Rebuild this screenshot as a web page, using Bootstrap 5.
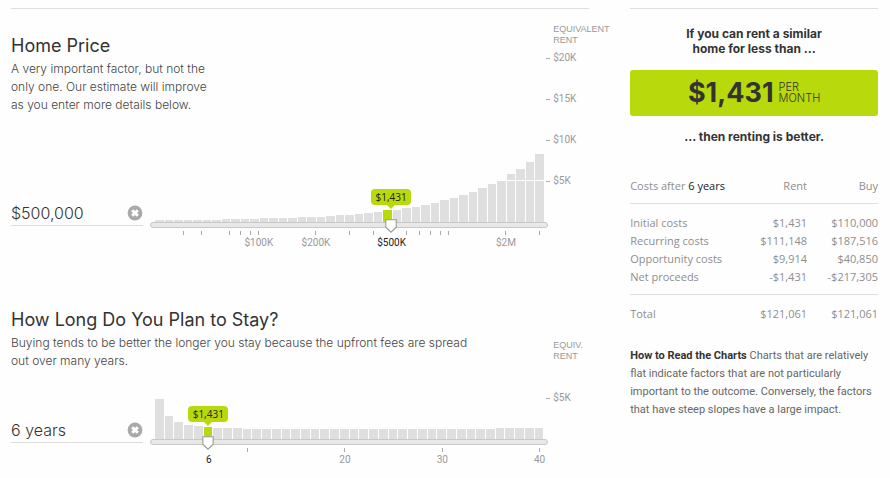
<!DOCTYPE html>
<html lang="en">
<head>
<meta charset="utf-8">
<meta name="viewport" content="width=device-width, initial-scale=1">
<title>Is It Better to Rent or Buy?</title>
<link href="https://cdn.jsdelivr.net/npm/bootstrap@5.3.0/dist/css/bootstrap.min.css" rel="stylesheet">
<style>
  :root { --lime: #b8d90b; --bar: #dfdfdf; --rule: #dedede; --muted: #999; }
  body { font-family: Inter, "Liberation Sans", sans-serif; font-size: 12px; color: #333; background: #fefefe; }
  .page-grid { display: grid; grid-template-columns: 7fr 3fr; column-gap: 41px; padding: 8px 12px 0 11px; }
  .ruled { border-top: 1px solid var(--rule); }

  /* One factor: heading over an input, a bar chart with its slider, and a rent axis */
  .factor { display: grid; grid-template-columns: 139px 1fr 41px; grid-template-rows: auto 37px; }
  .factor-price { padding-top: 15px; }
  .factor-stay { padding-top: 81px; }
  .factor-head { grid-area: 1 / 1 / 2 / 3; }
  .factor-price .factor-head { padding-top: 10px; max-width: 202px; }
  .factor-stay .factor-head { max-width: 468px; margin-top: -32px; padding-bottom: 67px; }
  .factor-head h2 { font-size: 18px; line-height: 24px; font-weight: 400; margin: 0 0 2px; }
  .factor-head p { line-height: 18px; font-weight: 300; margin: 0; color: #444; }
  .value-field { grid-area: 1 / 1 / 2 / 2; margin: 0 7px -4px 0; border-bottom: 1px solid var(--rule); z-index: 1; }
  .value-field input { font-size: 16px; line-height: 24px; font-weight: 300; color: #333; min-width: 0; background: none; outline-offset: 2px; }
  .clear-btn { line-height: 0; }
  .plot { grid-area: 1 / 2 / 2 / 3; }
  .bars { padding: 0 4px 0 5px; }
  .bars > span { flex: 1 1 0; background: var(--bar); border-right: 1px solid #fefefe; }
  .bars > .current { background: var(--lime); }
  .gridline { bottom: 41px; height: 1px; background: #fefefe; }

  .axis { grid-area: 1 / 3 / 2 / 4; font-family: "Liberation Sans", sans-serif; color: var(--muted); }
  .axis-title { font-size: 9px; line-height: 11px; padding-left: 5px; width: 60px; margin-bottom: 12px; }
  .factor-stay .axis-title { margin-bottom: 36px; }
  .axis ol { font-family: Roboto, sans-serif; font-size: 10px; line-height: 12px; }
  .axis li { height: 41px; padding-left: 5px; }
  .axis li > span { display: block; transform: translateY(-50%); }
  .axis li > span::before { content: ""; position: absolute; left: -7px; top: 6px; width: 4px; height: 1px; background: #aaa; }

  .track-area { grid-area: 2 / 2 / 3 / 3; }
  .track { appearance: none; height: 6px; margin: 0; background: #e8e8e8; border: 1px solid #c8c8c8; border-radius: 3px; cursor: pointer; }
  .track::-webkit-slider-thumb { appearance: none; width: 11px; height: 13px; opacity: 0; }
  .handle { top: -3px; transform: translateX(-50%); pointer-events: none; }
  .scale-mark { top: 9px; width: 1px; height: 4px; background: #aaa; }
  .scale-mark > span { position: absolute; top: 5px; left: 50%; transform: translateX(-50%); font: 10px/13px Roboto, sans-serif; color: var(--muted); }
  .scale-mark.current { background: none; }
  .scale-mark.current > span { color: #222; }
  .rent-tip { bottom: 17px; transform: translateX(-50%); background: var(--lime); border-radius: 4px; width: 40px; font: 10px/16px "Open Sans", sans-serif; color: #222; }
  .rent-tip::after { content: ""; position: absolute; left: 50%; top: 100%; margin-left: -4px; border: 4px solid transparent; border-top-color: var(--lime); border-bottom: 0; }

  .lead-in { padding-top: 17px; }
  .verdict { font-size: 12px; line-height: 15px; font-weight: 700; margin: 0; }
  .answer { background: var(--lime); border-radius: 3px; padding: 6px 0; gap: 5px; margin: 14px 0 13px; }
  .answer strong { font-size: 27px; line-height: 34px; }
  .answer span { font-size: 11px; line-height: 11px; font-weight: 300; }
  .costs { margin: 33px 0 24px; color: #8e8e8e; font-family: "Open Sans", sans-serif; font-size: 11px; line-height: 18px; }
  .costs th, .costs td { font-weight: inherit; padding: 0; }
  .costs th + *, .costs th + * + * { text-align: right; }
  .costs thead th { padding-bottom: 8px; }
  .costs thead th:last-child { width: 71px; }
  .costs tbody tr:first-child > *, .costs tfoot tr > * { padding-top: 10px; border-top: 1px solid var(--rule); }
  .costs tbody tr:last-child > * { padding-bottom: 8px; }
  .costs .years { color: #222; }
  .howto { font-family: Roboto, sans-serif; font-size: 11px; line-height: 18px; color: #666; }
  .howto b { color: #333; }
</style>
<script src="https://cdn.jsdelivr.net/npm/bootstrap@5.3.0/dist/js/bootstrap.bundle.min.js"></script>
</head>
<body>
<div class="page-grid">
  <main>
    <section class="factor factor-price ruled">
      <div class="factor-head">
        <h2>Home Price</h2>
        <p>A very important factor, but not the only one. Our estimate will improve as you enter more details below.</p>
      </div>
      <div class="value-field d-flex align-items-center align-self-end">
        <input id="price" class="border-0 p-0 flex-grow-1" type="text" value="$500,000" aria-label="Home price">
        <button class="clear-btn btn p-0 border-0" type="button" aria-label="Reset home price">
          <svg width="16" height="16" viewBox="0 0 16 16"><circle cx="8" cy="8" r="7.4" fill="#a9a9a9"/><path d="M5.2 5.2l5.6 5.6M10.8 5.2l-5.6 5.6" stroke="#fff" stroke-width="3"/></svg>
        </button>
      </div>
      <div class="plot position-relative d-flex flex-column justify-content-end">
        <div class="bars d-flex align-items-end" id="price-bars"></div>
        <div class="gridline position-absolute start-0 end-0"></div>
        <div class="rent-tip position-absolute text-center" id="price-tip">$1,431</div>
      </div>
      <div class="axis d-flex flex-column justify-content-end">
        <div class="axis-title">EQUIVALENT RENT</div>
        <ol class="list-unstyled m-0">
          <li><span>$20K</span></li><li><span>$15K</span></li><li><span>$10K</span></li><li><span>$5K</span></li>
        </ol>
      </div>
      <div class="track-area position-relative" id="price-scale">
        <input class="track d-block w-100" type="range" min="0" max="100" value="61" aria-label="Home price slider">
      </div>
    </section>

    <section class="factor factor-stay">
      <div class="factor-head">
        <h2>How Long Do You Plan to Stay?</h2>
        <p>Buying tends to be better the longer you stay because the upfront fees are spread out over many years.</p>
      </div>
      <div class="value-field d-flex align-items-center align-self-end">
        <input id="stay" class="border-0 p-0 flex-grow-1" type="text" value="6 years" aria-label="Years you plan to stay">
        <button class="clear-btn btn p-0 border-0" type="button" aria-label="Reset years">
          <svg width="16" height="16" viewBox="0 0 16 16"><circle cx="8" cy="8" r="7.4" fill="#a9a9a9"/><path d="M5.2 5.2l5.6 5.6M10.8 5.2l-5.6 5.6" stroke="#fff" stroke-width="3"/></svg>
        </button>
      </div>
      <div class="plot position-relative d-flex flex-column justify-content-end">
        <div class="bars d-flex align-items-end" id="stay-bars"></div>
        <div class="rent-tip position-absolute text-center" id="stay-tip">$1,431</div>
      </div>
      <div class="axis d-flex flex-column justify-content-end">
        <div class="axis-title">EQUIV.<br>RENT</div>
        <ol class="list-unstyled m-0"><li><span>$5K</span></li></ol>
      </div>
      <div class="track-area position-relative" id="stay-scale">
        <input class="track d-block w-100" type="range" min="1" max="40" value="6" aria-label="Years slider">
      </div>
    </section>
  </main>

  <aside class="ruled">
    <div class="lead-in text-center">
      <p class="verdict">If you can rent a similar<br>home for less than ...</p>
      <div class="answer d-flex justify-content-center align-items-center">
        <strong>$1,431</strong><span class="text-start">PER<br>MONTH</span>
      </div>
      <p class="verdict">... then renting is better.</p>
    </div>
    <table class="costs w-100">
      <thead><tr><th scope="col">Costs after <span class="years">6 years</span></th><th scope="col">Rent</th><th scope="col">Buy</th></tr></thead>
      <tbody>
        <tr><th scope="row">Initial costs</th><td>$1,431</td><td>$110,000</td></tr>
        <tr><th scope="row">Recurring costs</th><td>$111,148</td><td>$187,516</td></tr>
        <tr><th scope="row">Opportunity costs</th><td>$9,914</td><td>$40,850</td></tr>
        <tr><th scope="row">Net proceeds</th><td>-$1,431</td><td>-$217,305</td></tr>
      </tbody>
      <tfoot><tr><th scope="row">Total</th><td>$121,061</td><td>$121,061</td></tr></tfoot>
    </table>
    <p class="howto m-0"><b>How to Read the Charts</b> Charts that are relatively flat indicate factors that are not particularly important to the outcome. Conversely, the factors that have steep slopes have a large impact.</p>
  </aside>
</div>

<script>
  const PX_PER_DOLLAR = 41 / 5000;
  const HANDLE = '<svg width="12" height="14" viewBox="0 0 12 14"><path d="M.8.8h10.4v7.4L6 13.2.8 8.2z" fill="#fff" stroke="#999" stroke-width="1.1"/></svg>';

  function drawBars(id, rents, current) {
    document.getElementById(id).innerHTML = rents.map((r, i) =>
      `<span${i === current ? ' class="current"' : ''} style="height:${Math.round(r * PX_PER_DOLLAR)}px"></span>`).join('');
  }
  function drawScale(prefix, marks, toPercent, value) {
    const box = document.getElementById(prefix + '-scale');
    box.insertAdjacentHTML('beforeend', marks.map(([v, label]) =>
      `<div class="scale-mark position-absolute${v === value ? ' current' : ''}" style="left:${toPercent(v)}%">${label ? `<span>${label}</span>` : ''}</div>`).join('') +
      `<div class="handle position-absolute lh-1" style="left:${toPercent(value)}%">${HANDLE}</div>`);
    document.getElementById(prefix + '-tip').style.left = toPercent(value) + '%';
  }

  drawBars('price-bars', [200, 210, 220, 230, 250, 270, 290, 310, 340, 370, 400, 430, 460, 490, 520, 560, 610, 670, 730, 810, 890, 980, 1090, 1220, 1431,
    1500, 1660, 1870, 2110, 2360, 2680, 2960, 3290, 3690, 4140, 4630, 5160, 5810, 6500, 7300, 8300], 24);
  drawScale('price', [[40], [50], [70], [80], [90], [100, '$100K'], [200, '$200K'], [300], [400], [500, '$500K'], [600], [700], [800], [900], [1000], [2000, '$2M'], [3000]],
    v => ((Math.log10(v) - 2) * 47.7 + 27.2).toFixed(2), 500);

  drawBars('stay-bars', [4870, 2770, 2070, 1740, 1550, 1431, 1370, 1320, 1290, 1270, 1250, 1240, 1230, 1220, 1215, 1210, 1205, 1200, 1200, 1200,
    1200, 1200, 1200, 1210, 1210, 1220, 1220, 1225, 1230, 1235, 1250, 1260, 1270, 1275, 1280, 1285, 1290, 1295, 1300, 1300], 5);
  drawScale('stay', [[6, '6'], [10], [20, '20'], [30, '30'], [40, '40']], v => (97.7 - (40 - v) * 2.443).toFixed(2), 6);
</script>
</body>
</html>
